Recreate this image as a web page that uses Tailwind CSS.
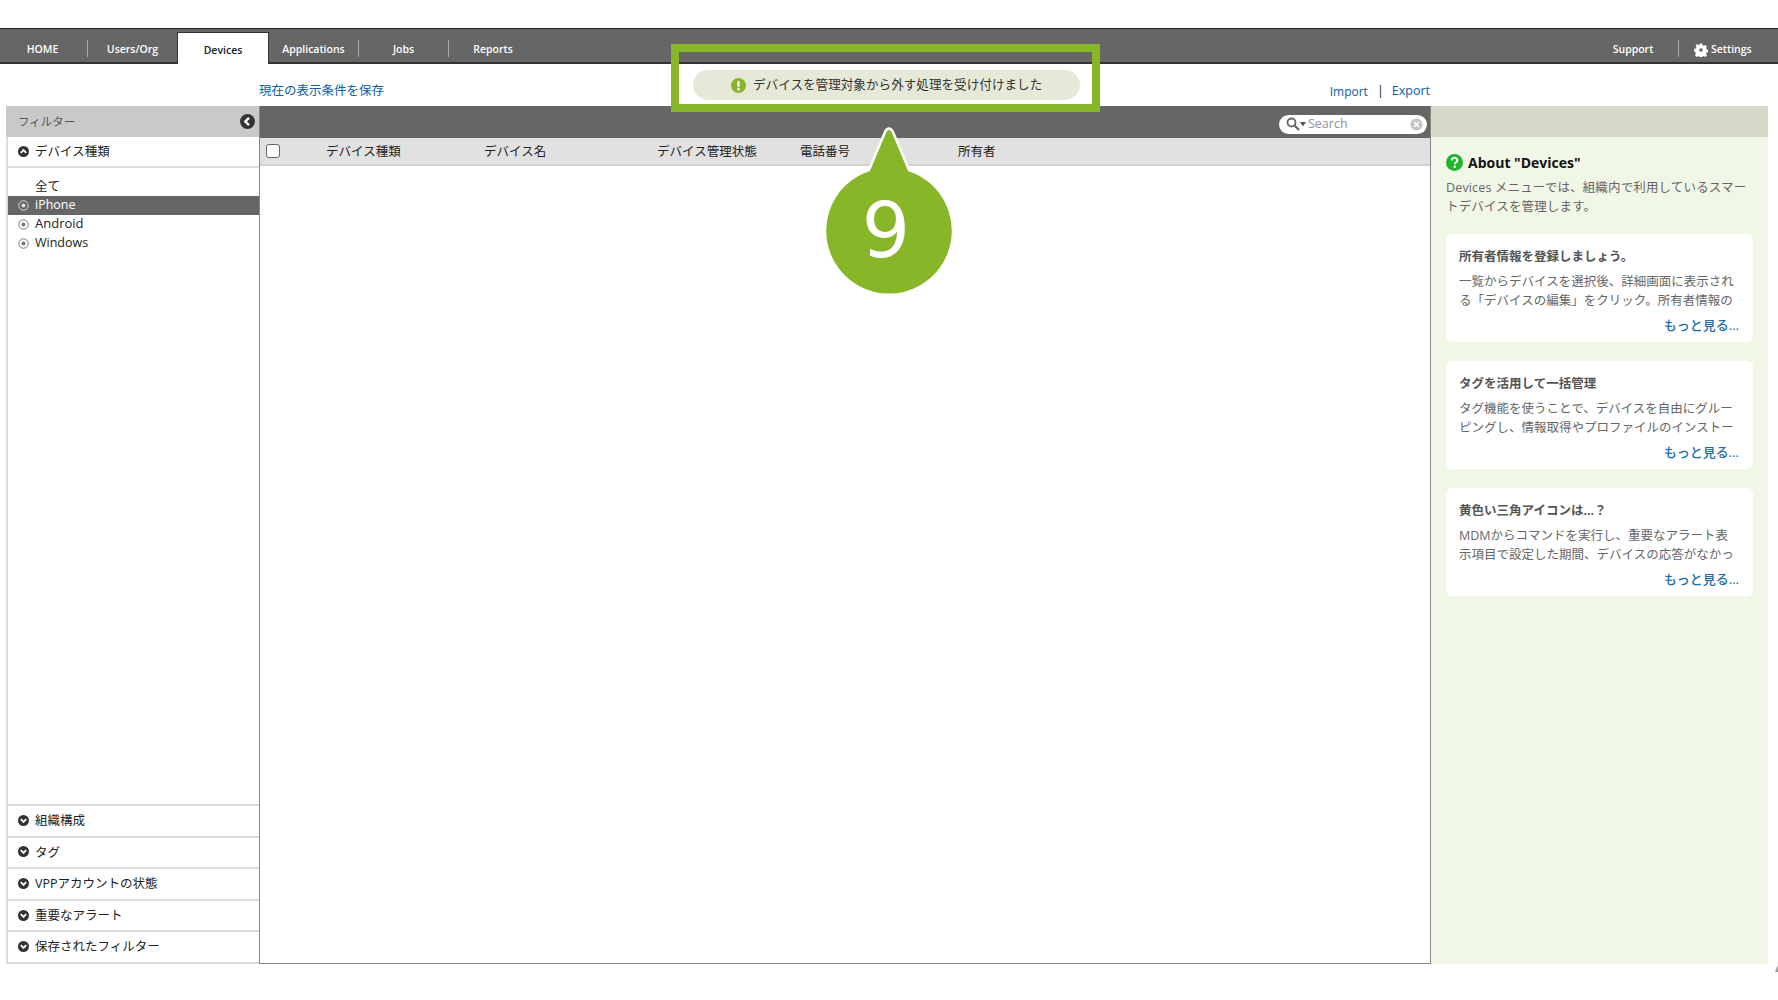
<!DOCTYPE html>
<html lang="ja"><head><meta charset="utf-8"><script src="https://cdn.jsdelivr.net/npm/@tailwindcss/browser@4"></script></head>
<body class="bg-white overflow-hidden">
<div class="relative w-[1778px] h-[1000px] pt-[28px] font-['Open_Sans','Noto_Sans_CJK_JP',sans-serif] text-[12.5px] text-[#222]">
  <nav class="h-[36px] bg-[#666666] border-t border-t-[#222] border-b-2 border-b-[#333] flex items-stretch text-white text-[10.5px] font-semibold">
    <div class="w-[87px] flex items-center justify-center pr-[2px] pt-[9px]"><span>HOME</span></div>
    <div class="w-px h-[17px] mt-[11px] bg-[#aaa]"></div>
    <div class="w-[89px] flex items-center justify-center pt-[9px]"><span>Users/Org</span></div>
    <div class="w-[92px] h-[32px] mt-[3px] bg-white text-[#222] border-t border-x border-[#333] flex items-center justify-center pt-[5px]"><span>Devices</span></div>
    <div class="w-[89px] flex items-center justify-center pt-[9px]"><span>Applications</span></div>
    <div class="w-px h-[17px] mt-[11px] bg-[#aaa]"></div>
    <div class="w-[89px] flex items-center justify-center pt-[9px]"><span>Jobs</span></div>
    <div class="w-px h-[17px] mt-[11px] bg-[#aaa]"></div>
    <div class="w-[88px] flex items-center justify-center pt-[9px]"><span>Reports</span></div>
    <div class="flex-1"></div>
    <div class="w-[90px] flex items-center justify-center pt-[9px]"><span>Support</span></div>
    <div class="w-px h-[17px] mt-[11px] bg-[#aaa]"></div>
    <div class="w-[99px] flex items-center pl-[15px] gap-[3px] pt-[9px]">
      <svg class="w-[14px] h-[14px]" viewBox="0 0 14 14"><path fill="#fff" fill-rule="evenodd" d="M5.800 0.600h2.400l.4 1.700 1.200.5 1.500-.9 1.700 1.700-.9 1.500.5 1.200 1.700.4v2.400l-1.700.4-.5 1.200.9 1.500-1.700 1.700-1.500-.9-1.200.5-.4 1.700H5.800l-.4-1.700-1.200-.5-1.500.9-1.700-1.700.9-1.500-.5-1.200L.2 8.200V5.800l1.700-.4.5-1.200-.9-1.500 1.700-1.700 1.500.9 1.200-.5zM7 5.200a1.800 1.800 0 1 0 0 3.600 1.800 1.800 0 0 0 0-3.600z"/></svg>
      <span>Settings</span>
    </div>
  </nav>
  <div class="h-[42px] relative flex items-center justify-between pl-[259px] pr-[348px] pt-[13px] text-[#0b5da8]">
    <span>現在の表示条件を保存</span>
    <span class="flex items-center"><span class="text-[12px]">Import</span><span class="ml-[9px] mr-[8px] text-[#222]">|</span><span>Export</span></span>
  </div>
  <div class="flex pl-[6px] h-[858px]">
    <aside class="w-[253px] flex flex-col border-l-2 border-[#dcdcdc]">
      <div class="h-[31px] -ml-[2px] bg-[#c9c9c9] flex items-center justify-between pl-[12px] pr-[4px] text-[#555] text-[11.5px]">
        <span class="pt-[1px]">フィルター</span>
        <svg class="w-[15px] h-[15px]" viewBox="0 0 15 15"><circle cx="7.5" cy="7.5" r="7.5" fill="#333"/><path d="M9 3.800 5.300 7.500 9 11.200" fill="none" stroke="#fff" stroke-width="2.400"/></svg>
      </div>
      <div class="h-[31px] flex items-center gap-[6px] pl-[10px] border-b-2 border-[#dcdcdc]">
        <svg class="w-[11px] h-[11px] -mt-[1px]" viewBox="0 0 11 11"><circle cx="5.5" cy="5.5" r="5.5" fill="#333"/><path d="M2.800 6.800 5.500 4.100l2.700 2.700" fill="none" stroke="#fff" stroke-width="1.800"/></svg>
        <span class="pt-[1px]">デバイス種類</span>
      </div>
      <div class="pt-[10px] flex flex-col">
        <div class="h-[18px] flex items-center pl-[27px]"><span>全て</span></div>
        <div class="h-[19px] flex items-center pl-[10px] gap-[6px] bg-[#666666] text-white">
          <svg class="w-[11px] h-[11px] -mt-[1px]" viewBox="0 0 11 11"><circle cx="5.5" cy="5.5" r="4.700" fill="none" stroke="#ddd"/><circle cx="5.5" cy="5.5" r="2" fill="#ddd"/></svg><span>iPhone</span>
        </div>
        <div class="h-[19px] flex items-center pl-[10px] gap-[6px]">
          <svg class="w-[11px] h-[11px] -mt-[1px]" viewBox="0 0 11 11"><circle cx="5.5" cy="5.5" r="4.700" fill="none" stroke="#777"/><circle cx="5.5" cy="5.5" r="2" fill="#777"/></svg><span class="text-[13px] -mt-[1px]">Android</span>
        </div>
        <div class="h-[19px] flex items-center pl-[10px] gap-[6px]">
          <svg class="w-[11px] h-[11px] -mt-[1px]" viewBox="0 0 11 11"><circle cx="5.5" cy="5.5" r="4.700" fill="none" stroke="#777"/><circle cx="5.5" cy="5.5" r="2" fill="#777"/></svg><span>Windows</span>
        </div>
      </div>
      <div class="flex-1"></div>
      <div class="h-[31.6px] flex items-center gap-[6px] pl-[10px] border-t-2 border-[#dcdcdc]"><svg class="w-[11px] h-[11px] -mt-[1px]" viewBox="0 0 11 11"><circle cx="5.5" cy="5.5" r="5.5" fill="#333"/><path d="M2.800 4.200 5.500 6.900l2.700-2.700" fill="none" stroke="#fff" stroke-width="1.800"/></svg><span class="pt-[1px]">組織構成</span></div>
      <div class="h-[31.6px] flex items-center gap-[6px] pl-[10px] border-t-2 border-[#dcdcdc]"><svg class="w-[11px] h-[11px] -mt-[1px]" viewBox="0 0 11 11"><circle cx="5.5" cy="5.5" r="5.5" fill="#333"/><path d="M2.800 4.200 5.500 6.900l2.700-2.700" fill="none" stroke="#fff" stroke-width="1.800"/></svg><span class="pt-[1px]">タグ</span></div>
      <div class="h-[31.6px] flex items-center gap-[6px] pl-[10px] border-t-2 border-[#dcdcdc]"><svg class="w-[11px] h-[11px] -mt-[1px]" viewBox="0 0 11 11"><circle cx="5.5" cy="5.5" r="5.5" fill="#333"/><path d="M2.800 4.200 5.500 6.900l2.700-2.700" fill="none" stroke="#fff" stroke-width="1.800"/></svg><span class="pt-[1px]">VPPアカウントの状態</span></div>
      <div class="h-[31.6px] flex items-center gap-[6px] pl-[10px] border-t-2 border-[#dcdcdc]"><svg class="w-[11px] h-[11px] -mt-[1px]" viewBox="0 0 11 11"><circle cx="5.5" cy="5.5" r="5.5" fill="#333"/><path d="M2.800 4.200 5.500 6.900l2.700-2.700" fill="none" stroke="#fff" stroke-width="1.800"/></svg><span class="pt-[1px]">重要なアラート</span></div>
      <div class="h-[33.6px] flex items-center gap-[6px] pl-[10px] border-y-2 border-[#dcdcdc]"><svg class="w-[11px] h-[11px] -mt-[1px]" viewBox="0 0 11 11"><circle cx="5.5" cy="5.5" r="5.5" fill="#333"/><path d="M2.800 4.200 5.500 6.900l2.700-2.700" fill="none" stroke="#fff" stroke-width="1.800"/></svg><span class="pt-[1px]">保存されたフィルター</span></div>
    </aside>
    <main class="w-[1172px] border-x border-b border-[#888] flex flex-col">
      <div class="h-[32px] bg-[#666666] flex items-center justify-end pr-[3px] pt-[4px]">
        <div class="w-[148px] h-[19px] bg-white rounded-full flex items-center pl-[7px] pr-[4px] text-[#8a94a8] text-[12.5px]">
          <svg class="w-[14px] h-[14px]" viewBox="0 0 14 14"><circle cx="5.500" cy="5.500" r="4" fill="none" stroke="#666" stroke-width="1.800"/><path d="m8.500 8.500 4.500 4.500" stroke="#666" stroke-width="2.200"/></svg>
          <svg class="w-[6px] h-[6px] mr-[2px]" viewBox="0 0 6 6"><path d="M0 1h6L3 5.500z" fill="#555"/></svg>
          <span class="flex-1 pt-[1px]">Search</span>
          <svg class="w-[13px] h-[13px]" viewBox="0 0 13 13"><circle cx="6.500" cy="6.500" r="6" fill="#c4c4c4"/><path d="m4 4 5 5M9 4l-5 5" stroke="#fff" stroke-width="1.600"/></svg>
        </div>
      </div>
      <div class="h-[28px] bg-[#e1e1e1] border-b-2 border-[#d2d2d2] relative flex items-center">
        <span class="ml-[6px] w-[14px] h-[14px] bg-white border border-[#666] rounded-[3px]"></span>
        <span class="absolute left-[66px] translate-y-[1px]">デバイス種類</span>
        <span class="absolute left-[224px] translate-y-[1px]">デバイス名</span>
        <span class="absolute left-[397px] translate-y-[1px]">デバイス管理状態</span>
        <span class="absolute left-[540px] translate-y-[1px]">電話番号</span>
        <span class="absolute left-[698px] translate-y-[1px]">所有者</span>
      </div>
      <div class="flex-1"></div>
    </main>
    <section class="w-[337px] bg-[#f1f7e6] flex flex-col">
      <div class="h-[31px] bg-[#d5d9c7]"></div>
      <div class="pt-[16px] px-[15px] text-[#666]">
        <div class="flex items-center gap-[5px] text-[14px] font-bold text-[#111] h-[18px]">
          <svg class="w-[17px] h-[17px]" viewBox="0 0 17 17"><circle cx="8.500" cy="8.500" r="8.500" fill="#1fb42e"/><path d="M5.800 6.400c0-3.400 5.600-3.300 5.600-.2 0 2-2.600 2-2.600 4" fill="none" stroke="#fff" stroke-width="2"/><circle cx="8.700" cy="12.800" r="1.300" fill="#fff"/></svg>
          <span>About "Devices"</span>
        </div>
        <p class="mt-[7px] leading-[19px] tracking-[0.15px]">Devices メニューでは、組織内で利用しているスマートデバイスを管理します。</p>
        <div class="mt-[18px] flex flex-col gap-[19px]">
          <article class="h-[108px] bg-white rounded-[6px] pt-[13px] px-[13px]">
            <h3 class="font-bold text-[#555] leading-[20px]">所有者情報を登録しましょう。</h3>
            <p class="mt-[5px] leading-[19px] h-[38px] overflow-hidden">一覧からデバイスを選択後、詳細画面に表示される「デバイスの編集」をクリック。所有者情報の</p>
            <p class="mt-[6px] text-right text-[13px] text-[#1b6cb0] font-medium leading-[18px] mr-[1px]">もっと見る...</p>
          </article>
          <article class="h-[108px] bg-white rounded-[6px] pt-[13px] px-[13px]">
            <h3 class="font-bold text-[#555] leading-[20px]">タグを活用して一括管理</h3>
            <p class="mt-[5px] leading-[19px] h-[38px] overflow-hidden">タグ機能を使うことで、デバイスを自由にグルーピングし、情報取得やプロファイルのインストー</p>
            <p class="mt-[6px] text-right text-[13px] text-[#1b6cb0] font-medium leading-[18px] mr-[1px]">もっと見る...</p>
          </article>
          <article class="h-[108px] bg-white rounded-[6px] pt-[13px] px-[13px]">
            <h3 class="font-bold text-[#555] leading-[20px]">黄色い三角アイコンは...？</h3>
            <p class="mt-[5px] leading-[19px] h-[38px] overflow-hidden">MDMからコマンドを実行し、重要なアラート表<br>示項目で設定した期間、デバイスの応答がなかっ</p>
            <p class="mt-[6px] text-right text-[13px] text-[#1b6cb0] font-medium leading-[18px] mr-[1px]">もっと見る...</p>
          </article>
        </div>
      </div>
    </section>
  </div>
  <svg class="absolute left-[1775px] top-[965px] w-[3px] h-[7px]" viewBox="0 0 3 7"><path d="M3 0v7H0z" fill="#999"/></svg>

  <div class="absolute left-[671px] top-[44px] w-[429px] h-[68px] border-[8px] border-[#87b728] flex items-start pl-[14px] pt-[18px]">
    <div class="w-[387px] h-[30px] rounded-full bg-[#e6e9d8] flex items-center pl-[38px] gap-[7px] text-[12.6px] text-[#333]">
      <svg class="w-[15px] h-[15px]" viewBox="0 0 15 15"><circle cx="7.500" cy="7.500" r="7.500" fill="#87b728"/><rect x="6.300" y="3" width="2.400" height="6" rx="1" fill="#fff"/><circle cx="7.500" cy="11.200" r="1.400" fill="#fff"/></svg>
      <span>デバイスを管理対象から外す処理を受け付けました</span>
    </div>
  </div>
  <div class="absolute left-[823px] top-[126px] w-[132px] h-[172px]">
    <svg class="absolute inset-0 w-full h-full" viewBox="0 0 132 172"><path d="M66 2.500c2 0 3 1.600 4 3.500L86 44a64 64 0 1 1-40 0L62 6c1-2 2-3.500 4-3.500z" fill="#87b728" stroke="#fff" stroke-width="2.500"/></svg>
    <span class="absolute left-0 right-[6px] top-[55px] text-center text-white text-[76px] leading-[100px] font-['DejaVu_Sans',sans-serif]">9</span>
  </div>
</div>
</body></html>
